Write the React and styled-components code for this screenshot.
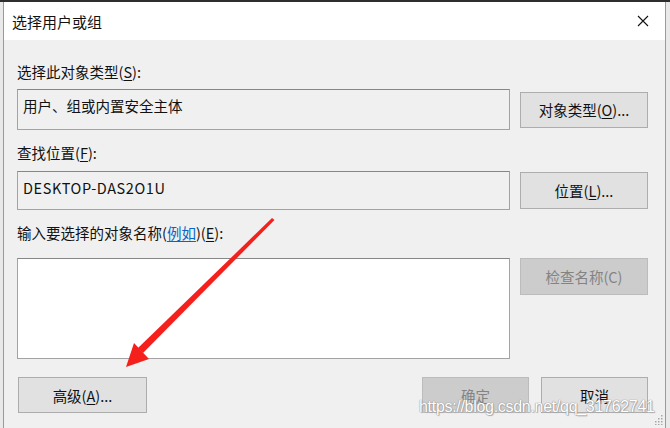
import styled, { createGlobalStyle } from "styled-components";

const Global = createGlobalStyle`
    html, body {
        margin: 0;
        padding: 0;
        background: #e6e6e6;
    }
    body {
        font-family: "Noto Sans CJK SC", "Noto Sans", sans-serif;
        color: #111;
    }
`

const Screen = styled.div`
    position: relative;
    width: 670px;
    height: 428px;
    overflow: hidden;
    display: flex;
    flex-direction: column;
    background: #e9e9e9;
`

const TopEdge = styled.div`
    height: 2px;
    background: #2e2e2e;
    flex: none;
`

const Window = styled.div`
    flex: 1;
    margin: 0 4px 0 3px;
    border-left: 1px solid #9a9a9a;
    border-right: 1px solid #9a9a9a;
    background: #f0f0f0;
    display: flex;
    flex-direction: column;
`

const TitleBar = styled.div`
    height: 38px;
    background: #fff;
    display: flex;
    align-items: center;
    justify-content: space-between;
    padding: 0 16px 0 8px;
    font-size: 15px;
`

const Close = styled.svg`
    width: 12px;
    height: 12px;
`

const Body = styled.div`
    padding: 22px 17px 0 13px;
    display: flex;
    flex-direction: column;
`

const Label = styled.div`
    font-size: 14.5px;
    line-height: 20px;
    height: 20px;
    margin-top: ${p => p.$gap || 0}px;
    white-space: nowrap;
`

const Key = styled.span`
    text-decoration: underline;
    text-underline-offset: 2px;
`

const Link = styled.span`
    color: #0a64c8;
    text-decoration: underline;
    text-underline-offset: 2px;
`

const Row = styled.div`
    display: grid;
    grid-template-columns: 493px 128px;
    column-gap: 10px;
    align-items: ${p => p.$align || "center"};
    margin-top: ${p => p.$gap || 0}px;
`

const Field = styled.div`
    height: ${p => p.$h}px;
    box-sizing: border-box;
    border: 1px solid #a3a3a3;
    border-top-color: #868686;
    background: ${p => (p.$white ? "#fff" : "#f0f0f0")};
    padding: 6px 5px;
    font-size: 14.5px;
    line-height: 20px;
    letter-spacing: ${p => (p.$latin ? "0.6px" : "0")};
`

const Button = styled.div`
    height: ${p => p.$h || 36}px;
    box-sizing: border-box;
    border: 1px solid ${p => (p.$disabled ? "#bcbcbc" : "#adadad")};
    background: ${p => (p.$disabled ? "#cccccc" : "#e1e1e1")};
    color: ${p => (p.$disabled ? "#838383" : "#111")};
    font-size: 14.5px;
    display: flex;
    align-items: center;
    justify-content: center;
    width: ${p => (p.$w ? p.$w + "px" : "auto")};
`

const Footer = styled.div`
    display: flex;
    align-items: center;
    gap: 12px;
    margin-top: 18px;
    padding-left: 1px;
`

const Spacer = styled.div`
    flex: 1;
`

const Arrow = styled.svg`
    position: absolute;
    left: 0;
    top: 0;
    width: 670px;
    height: 428px;
    pointer-events: none;
`

const Watermark = styled.div`
    position: absolute;
    left: 419px;
    top: 398px;
    font-family: "Liberation Sans", Arial, sans-serif;
    font-size: 16px;
    letter-spacing: -0.3px;
    color: #fff;
    text-shadow: 0 0 1px #8c8c8c, 0 0 1px #8c8c8c, 1px 1px 1px #b0b0b0;
    white-space: nowrap;
`

const Grip = styled.svg`
    position: absolute;
    left: 654px;
    top: 413px;
    width: 10px;
    height: 12px;
`

const App = () => {
    const dots = [[7, 2], [7, 5], [4, 5], [7, 8], [4, 8], [1, 8], [7, 11], [4, 11], [1, 11]]

    return (
        <>
            <Global />
            <Screen>
                <TopEdge />
                <Window>
                    <TitleBar>
                        <span>选择用户或组</span>
                        <Close viewBox="0 0 12 12">
                            <path d="M1 1 L11 11 M11 1 L1 11" stroke="#111" strokeWidth="1.1" fill="none" />
                        </Close>
                    </TitleBar>
                    <Body>
                        <Label>选择此对象类型(<Key>S</Key>):</Label>
                        <Row $gap={7}>
                            <Field $h={41}>用户、组或内置安全主体</Field>
                            <Button $h={36}>对象类型(<Key>O</Key>)...</Button>
                        </Row>
                        <Label $gap={13}>查找位置(<Key>F</Key>):</Label>
                        <Row $gap={8}>
                            <Field $h={39} $latin>DESKTOP-DAS2O1U</Field>
                            <Button $h={37}>位置(<Key>L</Key>)...</Button>
                        </Row>
                        <Label $gap={13}>输入要选择的对象名称(<Link>例如</Link>)(<Key>E</Key>):</Label>
                        <Row $gap={15} $align="start">
                            <Field $h={101} $white />
                            <Button $h={37} $disabled>检查名称(C)</Button>
                        </Row>
                        <Footer>
                            <Button $w={129}>高级(<Key>A</Key>)...</Button>
                            <Spacer />
                            <Button $w={107} $disabled>确定</Button>
                            <Button $w={107}>取消</Button>
                        </Footer>
                    </Body>
                </Window>
                <Arrow viewBox="0 0 670 428">
                    <polygon points="272,218 274.5,220 143,353 138,348" fill="#f5201c" />
                    <polygon points="126,367 134,343 149,359" fill="#f5201c" />
                </Arrow>
                <Watermark>https://blog.csdn.net/qq_31762741</Watermark>
                <Grip viewBox="0 0 10 12">
                    {dots.map(([x, y], i) => (
                        <rect key={i} x={x} y={y} width="1.5" height="1.5" fill="#a8a8a8" />
                    ))}
                </Grip>
            </Screen>
        </>
    )
}

export default App;
